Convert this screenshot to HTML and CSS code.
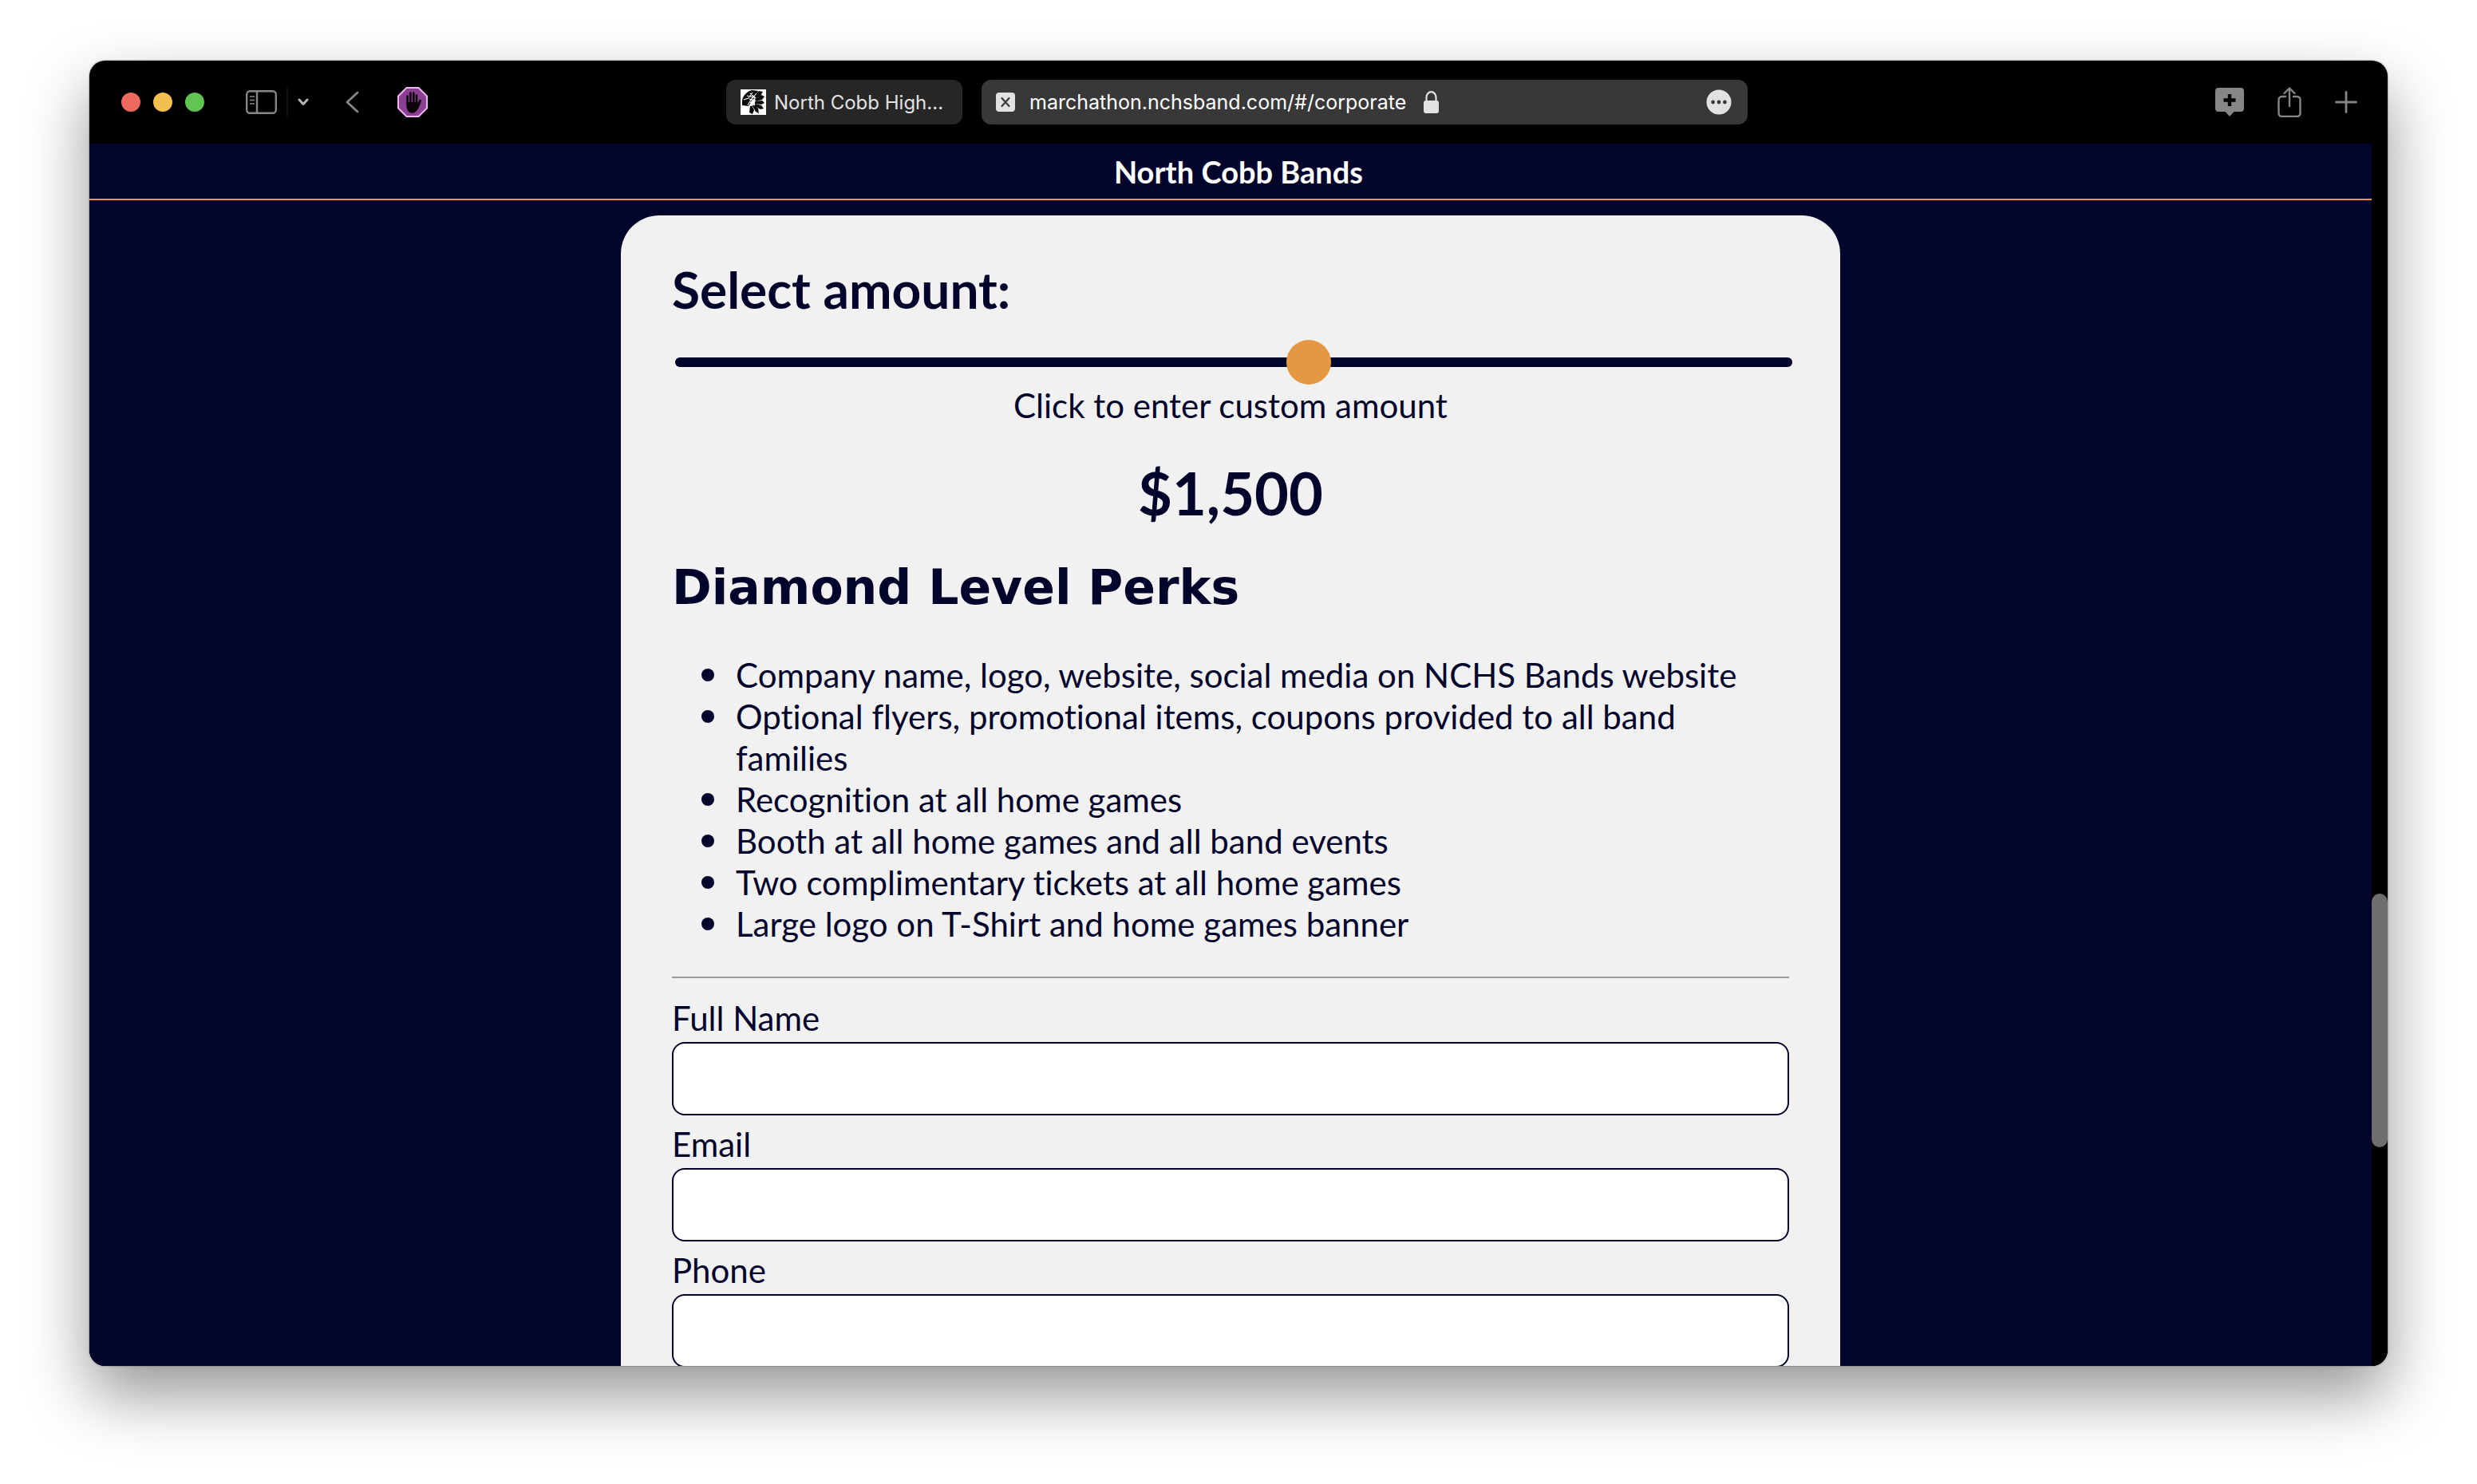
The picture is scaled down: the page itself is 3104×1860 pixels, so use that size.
FILE: index.html
```html
<!DOCTYPE html>
<html lang="en">
<head>
<meta charset="utf-8">
<title>North Cobb Bands</title>
<link rel="stylesheet" href="styles.css">
</head>
<body>
<div class="window">
  <div class="toolbar">
    <div class="tools-left">
      <div class="lights"><span class="light red"></span><span class="light yellow"></span><span class="light green"></span></div>
      <button class="tool sidebar-btn" aria-label="Show sidebar">
        <svg width="39" height="30" viewBox="0 0 39 30" fill="none" stroke="#868686" stroke-width="2.4"><rect x="1.2" y="1.2" width="36.6" height="27.6" rx="4"/><path d="M14 1v28"/><path d="M5 8h6M5 12.500h6M5 17h6" stroke-width="1.600"/></svg>
      </button>
      <span class="divider"></span>
      <button class="tool menu-btn" aria-label="Tab groups">
        <svg width="14" height="10" viewBox="0 0 14 10" fill="none" stroke="#b4b4b4" stroke-width="3" stroke-linecap="round" stroke-linejoin="round"><path d="M2 2l5 5.500L12 2"/></svg>
      </button>
      <button class="tool back-btn" aria-label="Back">
        <svg width="17" height="28" viewBox="0 0 17 28" fill="none" stroke="#868686" stroke-width="2.800" stroke-linecap="round" stroke-linejoin="round"><path d="M15 2L2 14l13 12"/></svg>
      </button>
      <button class="tool" aria-label="Content blocker">
        <svg width="38" height="38" viewBox="0 0 38 38"><path d="M11.500 1h15L37 11.500v15L26.500 37h-15L1 26.500v-15z" fill="#8a3f92" stroke="#eeb4f4" stroke-width="2"/><g stroke="#0b020c" stroke-width="2.600" stroke-linecap="round" fill="none"><path d="M12.600 22V11.500M16.400 20V7.500M20.300 20V7.500M24 22V10.500"/><path d="M24.500 26l4-9"/></g><path d="M11.300 19h14v4l4.300-6.500c.6 1-3.600 16.200-10.600 16.200-5.600 0-7.700-5-7.700-10z" fill="#0b020c"/></svg>
      </button>
    </div>
    <div class="tabs">
      <button class="tab">
        <svg width="32" height="32" viewBox="0 0 32 32"><path fill="#fff" d="M0 0h32v32H0z"/><path d="M2 20V14C3 8 8 2 15 1l7 1-2 5-6 8-4 6z" fill="#0a0a0a"/><g fill="#0a0a0a"><path d="M17 9L23 2l5 1-3 5-7 4z"/><path d="M18 12l8-5 4 2-3 4-8 2z"/><path d="M18 15l9-1 3 3-4 2-8-1z"/><path d="M18 18l8 2 3 4-4 1-8-4z"/><path d="M16 19l6 5 1 6-4-2-4-7z"/><path d="M14 20l3 6-2 5-4-2 1-8z"/></g><g stroke="#fff" stroke-width="1.100" fill="none"><path d="M4 13l6-2 5-7M9 20l4-7 7-8M8 8l10 2M12 5l7 6M11 12l8 3M12 16l6 4M15 9l-2 12"/></g></svg>
        <span>North Cobb High...</span>
      </button>
      <div class="address">
        <svg width="24" height="24" viewBox="0 0 24 24"><rect width="24" height="24" rx="4" fill="#e2e2e2"/><path d="M7.500 7l9 10M16.500 7l-9 10" stroke="#3a3a3a" stroke-width="2.200" stroke-linecap="round"/></svg>
        <input class="url" type="text" aria-label="Address" value="marchathon.nchsband.com/#/corporate">
        <svg class="lock" width="19" height="28" viewBox="0 0 19 28"><path d="M3.500 13V8a6 6.800 0 0 1 12 0v5" fill="none" stroke="#e2e2e2" stroke-width="2.200"/><rect y="12" width="19" height="16" rx="3" fill="#e2e2e2"/></svg>
        <button class="tool more" aria-label="Page menu">
          <svg width="32" height="32" viewBox="0 0 32 32"><circle cx="16" cy="16" r="15.500" fill="#e2e2e2"/><g fill="#3a3a3a"><circle cx="8.600" cy="16" r="2.400"/><circle cx="16" cy="16" r="2.400"/><circle cx="23.400" cy="16" r="2.400"/></g></svg>
        </button>
      </div>
    </div>
    <div class="tools-right">
      <button class="tool" aria-label="Add note">
        <svg width="36" height="38" viewBox="0 0 36 38"><path d="M4 1h28a4 4 0 0 1 4 4v22a4 4 0 0 1-4 4h-8.500L18 37l-5.500-6H4a4 4 0 0 1-4-4V5a4 4 0 0 1 4-4z" fill="#868686"/><path d="M18 9v15M10.500 16.500h15" stroke="#000" stroke-width="4.400"/></svg>
      </button>
      <button class="tool" aria-label="Share">
        <svg width="30" height="38" viewBox="0 0 30 38" fill="none" stroke="#868686" stroke-width="2.400" stroke-linecap="round" stroke-linejoin="round"><path d="M10 12H5.500A4 4 0 0 0 1.500 16v17a4 4 0 0 0 4 4h19a4 4 0 0 0 4-4V16a4 4 0 0 0-4-4H20M15 24V2M8.500 8L15 1.500 21.500 8"/></svg>
      </button>
      <button class="tool" aria-label="New tab">
        <svg width="28" height="28" viewBox="0 0 28 28" stroke="#868686" stroke-width="2.800" stroke-linecap="round"><path d="M14 1.500v25M1.500 14h25"/></svg>
      </button>
    </div>
  </div>
  <div class="viewport">
    <div class="page">
      <header class="site-header">North Cobb Bands</header>
      <main class="card">
        <h2 class="title"><label for="amount">Select amount:</label></h2>
        <input class="slider" id="amount" type="range" min="0" max="1000" value="570">
        <button class="custom">Click to enter custom amount</button>
        <output class="amount" for="amount">$1,500</output>
        <h3 class="level">Diamond Level Perks</h3>
        <ul class="perks">
          <li>Company name, logo, website, social media on NCHS Bands website</li>
          <li>Optional flyers, promotional items, coupons provided to all band families</li>
          <li>Recognition at all home games</li>
          <li>Booth at all home games and all band events</li>
          <li>Two complimentary tickets at all home games</li>
          <li>Large logo on T-Shirt and home games banner</li>
        </ul>
        <hr class="rule">
        <form class="form">
          <label for="name">Full Name</label>
          <input id="name" type="text">
          <label for="email">Email</label>
          <input id="email" type="email">
          <label for="phone">Phone</label>
          <input id="phone" type="tel">
        </form>
      </main>
    </div>
    <div class="scrollbar"><div class="scroll-thumb"></div></div>
  </div>
</div>
</body>
</html>
```
FILE: styles.css
```css
* { box-sizing: border-box; }

body {
  margin: 0;
  height: 100vh;
  padding: 76px 112px 148px;
  display: flex;
  overflow: hidden;
  background: #fff;
  font-family: Lato, "Liberation Sans", sans-serif;
  font-variant-ligatures: none;
}

.window {
  flex: 1;
  min-width: 0;
  display: flex;
  flex-direction: column;
  border-radius: 20px;
  overflow: hidden;
  background: #000;
  box-shadow: 0 0 2px rgba(0, 0, 0, 0.6), 0 36px 80px rgba(0, 0, 0, 0.42);
}

.toolbar {
  flex: none;
  height: 104px;
  padding: 0 38px 0 34px;
  display: grid;
  grid-template-columns: 1fr auto 1fr;
  align-items: center;
  font-family: Inter, "Liberation Sans", sans-serif;
}

.tool {
  display: flex;
  padding: 0;
  border: 0;
  background: none;
}

.tools-left,
.tools-right,
.lights,
.tabs,
.tab,
.address {
  display: flex;
  align-items: center;
}

.tools-left { padding-left: 6px; }
.tools-right { justify-content: flex-end; gap: 42px; }
.lights { gap: 16px; }
.light { width: 24px; height: 24px; border-radius: 50%; }
.red { background: #ed6a5e; }
.yellow { background: #f5bf4f; }
.green { background: #61c554; }
.sidebar-btn { margin-left: 52px; }
.divider { width: 2px; height: 36px; margin: 0 12px; background: #141414; }
.back-btn { margin: 0 48px 0 46px; }

.tabs { gap: 24px; }

.tab,
.address {
  height: 56px;
  padding: 0 20px 0 18px;
  border: 0;
  border-radius: 12px;
}

.tab {
  gap: 10px;
  width: 296px;
  background: #262626;
  color: #e2e2e2;
  font: 24px Inter, "Liberation Sans", sans-serif;
  white-space: nowrap;
}

.address {
  width: 960px;
  background: #383838;
}

.url {
  width: 486px;
  margin: 0 8px 0 18px;
  padding: 0;
  border: 0;
  background: none;
  color: #fff;
  font: 25px Inter, "Liberation Sans", sans-serif;
}

.more { margin-left: auto; }

.viewport {
  flex: 1;
  min-height: 0;
  display: flex;
}

.page {
  flex: 1;
  min-width: 0;
  overflow: hidden;
  background: #02042b;
  color: #02042b;
}

.site-header {
  height: 71px;
  padding-left: 20px;
  border-bottom: 2px solid #e59843;
  color: #fff;
  font-size: 38px;
  font-weight: 700;
  line-height: 70px;
  text-align: center;
}

.card {
  width: 1528px;
  max-width: 100%;
  margin: 19px auto 0;
  padding: 56px 64px 64px;
  display: flex;
  flex-direction: column;
  border-radius: 48px;
  background: #f1f1f1;
  font-size: 42px;
  line-height: 52px;
}

.title {
  margin: 0;
  font-size: 64px;
  font-weight: 700;
  line-height: 74px;
}

.slider {
  appearance: none;
  height: 12px;
  margin: 48px -4px 0 4px;
  border-radius: 6px;
  background: #02042b;
}

.slider::-webkit-slider-thumb {
  appearance: none;
  width: 56px;
  height: 56px;
  border-radius: 50%;
  background: #e59843;
}

.custom {
  align-self: center;
  margin: 22px 0 0;
  padding: 0;
  border: 0;
  background: none;
  color: inherit;
  font: inherit;
}

.amount {
  margin-top: 36px;
  font-size: 74px;
  font-weight: 700;
  line-height: 96px;
  text-align: center;
}

.level {
  margin: 34px 0 0;
  font: 700 60px/72px "DejaVu Sans", sans-serif;
}

.perks {
  margin: 48px 0 0;
  padding-left: 37px;
  list-style: none;
}

.perks li {
  display: flex;
  gap: 27px;
}

.perks li::before {
  content: "";
  flex: none;
  width: 16px;
  height: 16px;
  margin-top: 18px;
  border-radius: 50%;
  background: #02042b;
}

.rule {
  width: 100%;
  height: 2px;
  margin: 40px 0 24px;
  border: 0;
  background: #9a9a9a;
}

.form {
  display: flex;
  flex-direction: column;
}

.form input {
  height: 92px;
  margin: 4px 0 10px;
  padding: 0 20px;
  border: 2px solid #02042b;
  border-radius: 16px;
  background: #fff;
  font: inherit;
}

.scrollbar {
  width: 20px;
  padding-top: 940px;
  background: #000;
}

.scroll-thumb {
  height: 318px;
  border-radius: 10px;
  background: #6e6e6e;
}
```
